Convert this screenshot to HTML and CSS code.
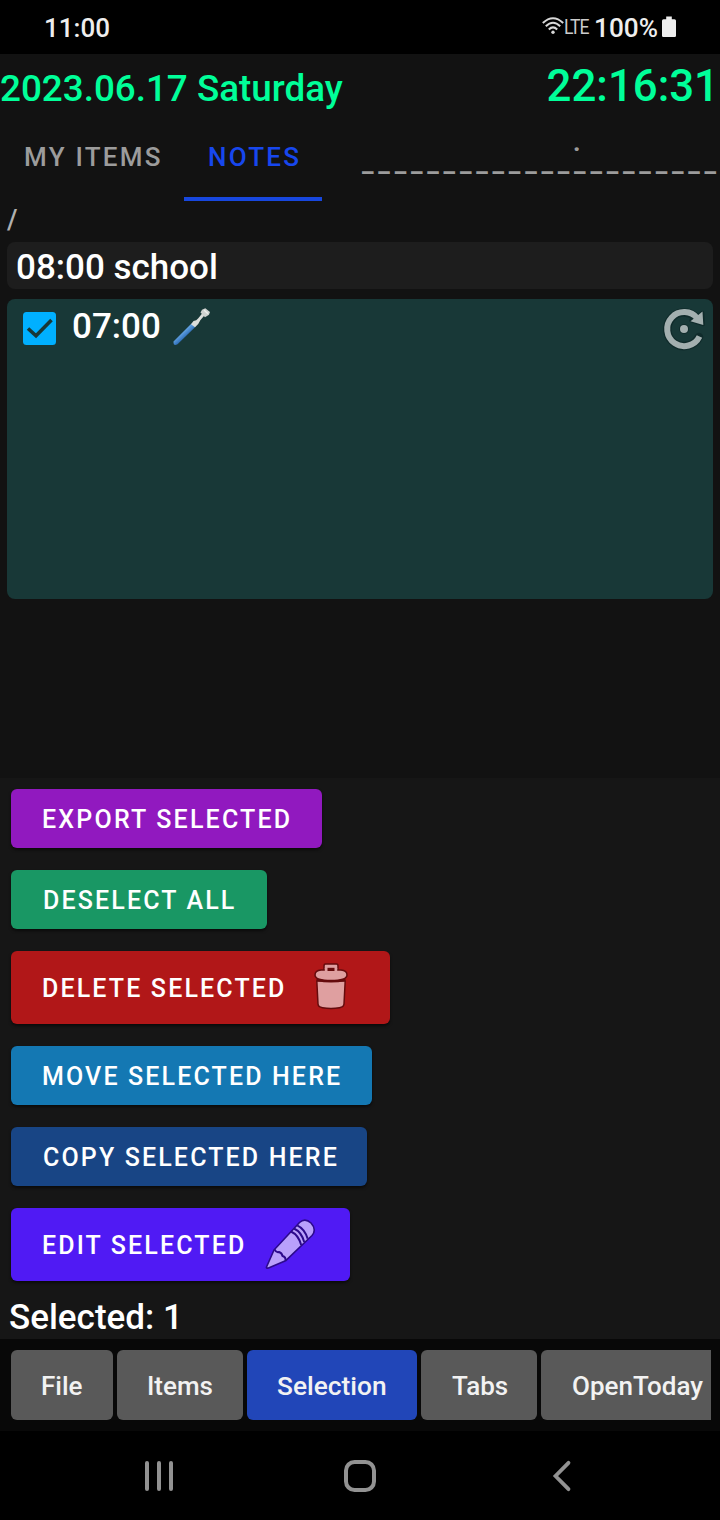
FILE: index.html
```html
<!DOCTYPE html>
<html lang="en">
<head>
<meta charset="utf-8">
<title>OpenToday</title>
<link rel="stylesheet" href="styles.css">
</head>
<body>
<div class="status">
  <span class="status-clock">11:00</span>
  <div class="status-right">
    <svg class="wifi" width="22" height="18" viewBox="0 0 22 18" fill="none" stroke="#d8d8d8"><path d="M.8 6Q11-3.600 21.200 6" stroke-width="2"/><path d="M3.800 9.300Q11 2.100 18.200 9.300" stroke-width="2"/><path d="M6.800 12.500Q11 8.300 15.200 12.500" stroke-width="2"/><circle cx="11" cy="15.300" r="1.700" fill="#d8d8d8" stroke="none"/></svg>
    <span class="lte">LTE</span>
    <span class="percent">100%</span>
    <svg class="battery" width="14" height="22" viewBox="0 0 14 22"><path d="M4.200.5h5.600v2.700h2.700q1.500 0 1.500 1.500v15q0 1.300-1.300 1.300H1.300Q0 21 0 19.700v-15Q0 3.200 1.500 3.200h2.700z" fill="#eee"/></svg>
  </div>
</div>
<header class="header">
  <span class="date">2023.06.17 Saturday</span>
  <span class="time">22:16:31</span>
</header>
<nav class="tabs">
  <div class="tab tab-items"><span>MY ITEMS</span></div>
  <div class="tab tab-notes"><span>NOTES</span></div>
  <div class="tab tab-dashes"><p class="divider">.<br>______________________</p></div>
</nav>
<div class="path">/</div>
<main class="list">
  <div class="note"><span class="t-school">08:00 school</span></div>
  <div class="card">
    <svg class="check" width="33" height="33" viewBox="0 0 33 33"><rect width="33" height="33" rx="3.500" fill="#00b0ff"/><path d="M5 16.500l8 7.300L28.500 8" fill="none" stroke="#183837" stroke-width="3.600"/></svg>
    <span class="t-seven">07:00</span>
    <svg class="brush" width="40" height="40" viewBox="0 0 40 40">
      <defs><linearGradient id="handle" gradientUnits="userSpaceOnUse" x1="9" y1="24" x2="13" y2="28.500"><stop offset="0" stop-color="#67a7e6"/><stop offset="1" stop-color="#2f6fb8"/></linearGradient></defs>
      <path d="M.5 33.500L18.500 15.500l4 3.300L4.500 36.300q-4.200 2.300-4-2.800z" fill="url(#handle)"/>
      <path d="M18 16.300l2.500-3.300q3-.3 4.800-2.800l4.200-5.200 2.300 2-4.500 5.300q-1.300 3.700-5.300 7z" fill="#dcdedb"/>
      <path d="M27.500 4.500L29 1.800l3.300-1.600 4.700 3.800-1 2.800-4 2.400z" fill="#cfd2cf"/><path d="M31 2l4 3.800" stroke="#eef0ed" stroke-width="1.300"/>
    </svg>
    <svg class="repeat" width="44" height="44" viewBox="0 0 44 44">
      <path d="M37 30A16.800 16.800 0 1 1 33 9.500" fill="none" stroke="#102b2b" stroke-linecap="round" stroke-width="8.500"/>
      <path d="M29 13.500L40.500 5.500 41.200 17.500z" fill="#102b2b" stroke="#102b2b" stroke-width="3.500" stroke-linejoin="round"/>
      <circle cx="22" cy="22" r="5" fill="#102b2b"/>
      <path d="M37.500 29.500A17 17 0 1 1 35.500 11.500" fill="none" stroke="#a3afaf" stroke-width="6"/>
      <path d="M28.500 14.300L35 9l5.500-4.500.8 13.400z" fill="#a3afaf"/>
      <circle cx="22" cy="22" r="4" fill="#a3afaf"/>
    </svg>
  </div>
</main>
<section class="actions">
  <div class="btn b-export"><span>EXPORT SELECTED</span></div>
  <div class="btn b-deselect"><span>DESELECT ALL</span></div>
  <div class="btn tall b-delete"><span>DELETE SELECTED</span>
    <svg class="trash" width="34" height="48" viewBox="0 0 34 48" fill="#df9fa0" stroke="#650b0d" stroke-width="1.500" stroke-linejoin="round"><path d="M2.800 19L4 42q.2 3 4.500 3.700 8.500 1.600 17 0 4.300-.7 4.500-3.700L31.200 19z"/><path d="M10 10V4q0-2 1.500-2h11Q24 2 24 4v6z"/><path d="M1 13q0-4.500 6-5h20q6 .5 6 5 0 5.500-16 5.500T1 13z"/><path d="M10.800 6h12.400v3H10.800z" stroke="none"/><path d="M13.500 5.800h7V9h-7z" fill="#650b0d" stroke="none"/><path d="M2.500 16.500q14.500 4 29 0V19q-14.500 3-29 0z" fill="#650b0d" stroke="none"/></svg>
  </div>
  <div class="btn b-move"><span>MOVE SELECTED HERE</span></div>
  <div class="btn b-copy"><span>COPY SELECTED HERE</span></div>
  <div class="btn tall b-edit"><span>EDIT SELECTED</span>
    <svg class="pencil" width="52" height="52" viewBox="0 0 52 52" fill="#b9a0fb" stroke="#2c0a8c" stroke-width="1.600" stroke-linejoin="round"><path d="M1.500 49L9 32 34.500 4.500q5.500-5 11.500.5 6 6.500 1 12.500L20.500 42.800 3.500 50q-2.500.5-2-1z"/><g fill="none"><path d="M9.500 31.500q2 3.500 4.500 2.500 3 1 3.500 4 3.500 1 3 4.800M26 13.500q7.500 3.500 10.200 13.500M29 10.500q7.500 3.500 10.200 13.500M32.200 7.300q7.500 3.500 10.500 13.500" stroke-width="2"/></g></svg>
  </div>
  <div class="selected">Selected: 1</div>
</section>
<div class="menu">
  <div class="menu-scroll">
    <div class="chip c-file">File</div><div class="chip c-items">Items</div><div class="chip c-selection">Selection</div><div class="chip c-tabs">Tabs</div><div class="chip c-open">OpenToday</div>
  </div>
</div>
<div class="sysnav">
  <svg class="recents" width="30" height="32" viewBox="0 0 30 32" stroke="#929292" stroke-width="4" stroke-linecap="round"><path d="M3 3v26M15 3v26M27 3v26"/></svg>
  <svg class="home" width="32" height="32" viewBox="0 0 32 32"><rect x="2" y="2" width="28" height="28" rx="8.500" fill="none" stroke="#929292" stroke-width="4"/></svg>
  <svg class="back" width="20" height="32" viewBox="0 0 20 32"><path d="M16.500 2.800L3.500 16l13 13.200" fill="none" stroke="#929292" stroke-width="3.800" stroke-linecap="round"/></svg>
</div>
</body>
</html>
```
FILE: styles.css
```css
* { box-sizing: border-box; }
body { margin: 0; width: 720px; height: 1520px; overflow: hidden; background: #121212; color: #fff; font-family: Roboto, "Liberation Sans", sans-serif; font-weight: 500; white-space: nowrap; }
svg { display: block; flex: none; }
.status { height: 54px; padding: 2px 44px 0 44px; background: #000; display: flex; justify-content: space-between; align-items: center; font-size: 26px; color: #eee; }
.status-right { display: flex; align-items: center; }
.wifi { margin-top: -4px; }
.lte { font-size: 20px; font-weight: 400; width: 30px; margin-top: -2px; color: #ccc; transform: scaleX(.88); transform-origin: left; letter-spacing: -1.200px; }
.percent { width: 68px; font-size: 26.200px; }
.battery { margin-top: -2px; }
.header { height: 59px; padding-top: 6px; display: flex; justify-content: space-between; align-items: baseline; color: #00ff99; line-height: 52px; }
.date { font-size: 36.800px; }
.time { font-size: 43.800px; padding-right: 1px; }
.tabs { height: 88px; display: flex; font-size: 26px; letter-spacing: 2.250px; color: #9c9c9c; }
.tab { flex: none; display: flex; align-items: center; }
.tab-items { width: 184px; padding-left: 24px; }
.tab-notes { width: 138px; padding: 4px 0 0 24px; border-bottom: 4px solid #1747de; color: #1747ee; }
.tab-dashes { width: 358px; margin-left: 40px; align-items: flex-start; padding-top: 19px; }
.divider { width: 358px; margin: 0; line-height: 20px; font-weight: 700; letter-spacing: 4.750px; text-indent: 211px; }
.path { height: 41px; padding-left: 7px; line-height: 38px; font-size: 27px; color: #b0b0b0; }
.list { height: 536px; padding: 0 7px; font-size: 35px; }
.note { height: 47px; padding: 1px 9px 0; border-radius: 8px; background: #1d1d1d; line-height: 50px; }
.card { height: 300px; margin-top: 10px; padding: 0 7px 0 16px; border-radius: 8px; background: #183837; display: flex; align-items: flex-start; }
.check { margin: 13px 16px 0 0; }
.t-seven { width: 101px; line-height: 55px; }
.brush { margin-top: 9px; }
.repeat { margin: 8px 0 0 auto; }
.actions { height: 561px; padding: 11px 11px 0; background: #161616; display: flex; flex-direction: column; align-items: flex-start; gap: 22px; }
.btn { height: 59px; flex: none; padding: 1px 0 0 31px; border-radius: 6px; display: flex; align-items: center; font-size: 25px; letter-spacing: 2.140px; box-shadow: 0 2px 3px #0008; }
.tall { height: 73px; }
.b-export { width: 311px; letter-spacing: 2.200px; background: #9119bf; }
.b-deselect { width: 256px; padding-left: 32px; background: #199764; }
.b-delete { width: 379px; background: #b11718; }
.b-move { width: 361px; background: #1478b3; }
.b-copy { width: 356px; padding-left: 32px; background: #184585; }
.b-edit { width: 339px; background: #501af4; }
.b-delete span { width: 272px; }
.b-edit span { width: 223px; }
.trash { margin-top: -4px; }
.pencil { margin-top: -2px; }
.selected { margin: -10px 0 0 -2px; line-height: 50px; font-size: 35px; }
.menu { height: 92px; padding: 11px 9px 0 11px; background: #080808; }
.menu-scroll { height: 81px; display: flex; gap: 4px; overflow: hidden; }
.chip { height: 70px; flex: none; padding: 2px 0 0 30px; line-height: 68px; border-radius: 6px; background: #595959; font-size: 26px; color: #f2f2f2; }
.c-file { width: 102px; }
.c-items { width: 126px; }
.c-selection { width: 170px; font-size: 26.300px; background: #2146b8; }
.c-tabs { width: 116px; padding-left: 31px; }
.c-open { width: 192px; padding-left: 31px; }
.sysnav { height: 89px; padding-left: 144px; background: #000; display: flex; align-items: center; }
.home { margin-left: 170px; }
.back { margin-left: 176px; }
```
